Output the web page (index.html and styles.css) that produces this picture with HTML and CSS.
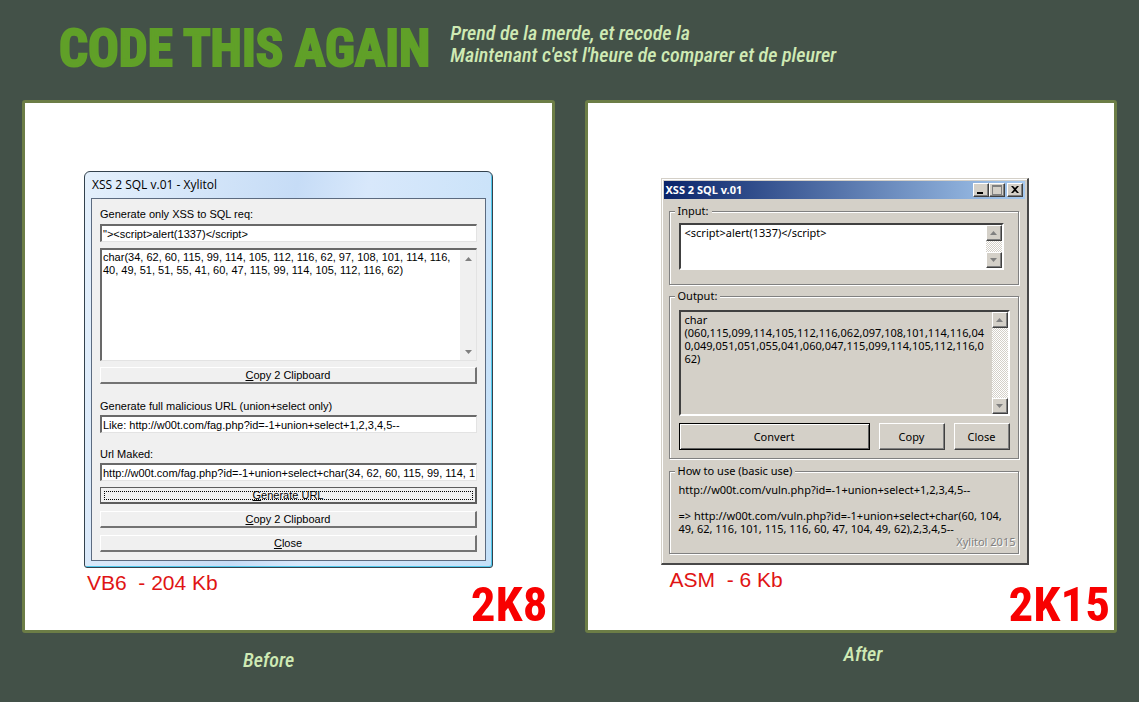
FILE: index.html
```html
<!DOCTYPE html>
<html lang="fr">
<head>
<meta charset="utf-8">
<title>Code this again</title>
<link rel="stylesheet" href="styles.css">
</head>
<body>
<header class="masthead">
  <h1 class="masthead-title">CODE THIS AGAIN</h1>
  <p class="masthead-text">Prend de la merde, et recode la<br>Maintenant c'est l'heure de comparer et de pleurer</p>
</header>
<main class="comparison">
  <figure class="entry">
    <div class="panel panel-before">
      <section class="aero" aria-label="XSS 2 SQL v.01 - Xylitol">
        <h2 class="aero-title">XSS 2 SQL v.01 - Xylitol</h2>
        <form class="aero-body">
          <label class="aero-label" for="req">Generate only XSS to SQL req:</label>
          <input class="aero-input" id="req" type="text" value="&quot;&gt;&lt;script&gt;alert(1337)&lt;/script&gt;">
          <div class="aero-memo">
            <textarea class="aero-area" aria-label="SQL request">char(34, 62, 60, 115, 99, 114, 105, 112, 116, 62, 97, 108, 101, 114, 116,
40, 49, 51, 51, 55, 41, 60, 47, 115, 99, 114, 105, 112, 116, 62)</textarea>
            <div class="aero-scroll" aria-hidden="true">
              <svg class="arrow" viewBox="0 0 7 4"><path d="M0 4L3.500 0L7 4Z"/></svg>
              <svg class="arrow" viewBox="0 0 7 4"><path d="M0 0L3.500 4L7 0Z"/></svg>
            </div>
          </div>
          <button class="aero-button" type="button"><u>C</u>opy 2 Clipboard</button>
          <label class="aero-label aero-label-spaced" for="url">Generate full malicious URL (union+select only)</label>
          <input class="aero-input" id="url" type="text" value="Like: http://w00t.com/fag.php?id=-1+union+select+1,2,3,4,5--">
          <label class="aero-label aero-label-spaced" for="made">Url Maked:</label>
          <input class="aero-input" id="made" type="text" value="http://w00t.com/fag.php?id=-1+union+select+char(34, 62, 60, 115, 99, 114, 105, 112, 116, 62)">
          <button class="aero-button aero-button-focused" type="button"><u>G</u>enerate URL</button>
          <button class="aero-button" type="button"><u>C</u>opy 2 Clipboard</button>
          <button class="aero-button" type="button"><u>C</u>lose</button>
        </form>
      </section>
      <div class="panel-foot">
        <p class="size">VB6  - 204 Kb</p>
        <p class="year">2K8</p>
      </div>
    </div>
    <figcaption class="caption caption-before">Before</figcaption>
  </figure>
  <figure class="entry">
    <div class="panel panel-after">
      <section class="classic" aria-label="XSS 2 SQL v.01">
        <div class="classic-bar">
          <h2 class="classic-title">XSS 2 SQL v.01</h2>
          <button class="classic-control" type="button" aria-label="Minimize"><svg class="glyph" viewBox="0 0 12 10"><path d="M2 7h6v2H2z"/></svg></button>
          <button class="classic-control" type="button" aria-label="Maximize"><svg class="glyph glyph-off" viewBox="0 0 12 10"><path d="M1 0h10v10H1zM2 2v7h8V2z" fill-rule="evenodd"/></svg></button>
          <button class="classic-control classic-control-close" type="button" aria-label="Close window"><svg class="glyph" viewBox="0 0 12 10"><path d="M2 1h2l2 2 2-2h2L7 4.500 10 8H8L6 6 4 8H2l3-3.500z"/></svg></button>
        </div>
        <form class="classic-body">
          <fieldset class="group group-input">
            <legend class="group-name">Input:</legend>
            <div class="memo memo-input">
              <textarea class="memo-area" aria-label="Input">&lt;script&gt;alert(1337)&lt;/script&gt;</textarea>
              <div class="memo-scroll" aria-hidden="true">
                <span class="memo-arrow"><svg class="arrow" viewBox="0 0 7 4"><path d="M0 4L3.500 0L7 4Z"/></svg></span>
                <span class="memo-arrow"><svg class="arrow" viewBox="0 0 7 4"><path d="M0 0L3.500 4L7 0Z"/></svg></span>
              </div>
            </div>
          </fieldset>
          <fieldset class="group group-output">
            <legend class="group-name">Output:</legend>
            <div class="memo memo-output">
              <textarea class="memo-area" aria-label="Output" readonly>char
(060,115,099,114,105,112,116,062,097,108,101,114,116,04
0,049,051,051,055,041,060,047,115,099,114,105,112,116,0
62)</textarea>
              <div class="memo-scroll" aria-hidden="true">
                <span class="memo-arrow"><svg class="arrow" viewBox="0 0 7 4"><path d="M0 4L3.500 0L7 4Z"/></svg></span>
                <span class="memo-arrow"><svg class="arrow" viewBox="0 0 7 4"><path d="M0 0L3.500 4L7 0Z"/></svg></span>
              </div>
            </div>
            <div class="actions">
              <button class="action action-default" type="button">Convert</button>
              <button class="action action-copy" type="button">Copy</button>
              <button class="action" type="button">Close</button>
            </div>
          </fieldset>
          <fieldset class="group group-help">
            <legend class="group-name">How to use (basic use)</legend>
            <p class="help">http://w00t.com/vuln.php?id=-1+union+select+1,2,3,4,5--

=&gt; http://w00t.com/vuln.php?id=-1+union+select+char(60, 104,
49, 62, 116, 101, 115, 116, 60, 47, 104, 49, 62),2,3,4,5--</p>
            <p class="credit">Xylitol 2015</p>
          </fieldset>
        </form>
      </section>
      <div class="panel-foot">
        <p class="size">ASM  - 6 Kb</p>
        <p class="year">2K15</p>
      </div>
    </div>
    <figcaption class="caption caption-after">After</figcaption>
  </figure>
</main>
</body>
</html>
```
FILE: styles.css
```css
* { box-sizing: border-box; }

body {
  margin: 0;
  background: #435148;
  font-family: "Liberation Sans", Arial, sans-serif;
  color: #000;
}

h1, h2, p, figure, form { margin: 0; }

/* Masthead */
.masthead {
  display: flex;
  gap: 20px;
  height: 100px;
  padding: 20px 24px 0 59px;
}

.masthead-title {
  font: 700 51px/58px "Roboto Condensed", "Liberation Sans Narrow", sans-serif;
  color: #60a028;
  -webkit-text-stroke: 2px #60a028;
  white-space: nowrap;
}

.masthead-text,
.caption {
  font: italic 500 20px/22px "Roboto Condensed", "Liberation Sans Narrow", sans-serif;
  color: #cfeab4;
}

.masthead-text { padding-top: 2px; }

/* Two panels side by side */
.comparison {
  display: grid;
  grid-template-columns: 1fr 1fr;
  gap: 30px;
  padding: 0 22px;
}

.entry {
  display: flex;
  flex-direction: column;
}

.panel {
  display: flex;
  flex-direction: column;
  min-height: 533px;
  border: 3px solid #6c7d46;
  border-radius: 3px;
  background: #fff;
}

.panel-before { padding: 68px 4px 0 59px; }
.panel-after { padding: 75px 4px 0 73px; }

.panel-foot {
  display: flex;
  flex: 1;
  justify-content: space-between;
  padding-left: 3px;
}

.panel-after .panel-foot { padding-left: 9px; }

.size {
  font-size: 21px;
  line-height: 30px;
  color: #e01414;
  white-space: pre;
}

.year {
  align-self: flex-end;
  font: 700 49px/50px "Roboto Condensed", "Liberation Sans Narrow", sans-serif;
  color: #f80000;
}

.caption { padding-top: 16px; }
.caption-before { padding-left: 221px; }
.caption-after { padding-top: 10px; padding-left: 259px; }

.arrow {
  display: block;
  width: 7px;
  height: 4px;
  fill: #808080;
}

/* Aero window */
.aero {
  width: 409px;
  max-width: 100%;
  padding: 0 6px 6px;
  border: 1px solid #33424e;
  border-radius: 6px 6px 3px 3px;
  background: linear-gradient(100deg, #e4f0fc 0, #c6dcf6 45%, #d8e8fb 60%, #c4e0f8 100%);
  box-shadow: inset -1px -1px 0 #50c8ec;
}

.aero-title {
  padding-left: 1px;
  font: 400 12px/26px "Open Sans", "Noto Sans", sans-serif;
}

.aero-body {
  display: flex;
  flex-direction: column;
  padding: 7px 8px 8px;
  border: 1px solid #5c6b80;
  background: #f0f0f0;
  font-size: 11px;
}

.aero-label { line-height: 16px; padding-bottom: 2px; }

.aero-input {
  width: 100%;
  height: 18px;
  padding: 0 1px;
  border: 1px solid #e3e3e3;
  border-top: 2px solid #696969;
  border-left: 2px solid #696969;
  border-radius: 0;
  background: #fff;
  font: inherit;
}

.aero-memo {
  display: flex;
  height: 113px;
  margin: 6px 0;
  border: 1px solid #e3e3e3;
  border-top: 2px solid #696969;
  border-left: 2px solid #696969;
  background: #fff;
}

.aero-area,
.memo-area {
  flex: 1;
  min-width: 0;
  padding: 1px;
  border: 0;
  background: none;
  font: inherit;
  line-height: 13px;
  white-space: pre;
  overflow: hidden;
  resize: none;
}

.aero-scroll {
  display: flex;
  flex-direction: column;
  justify-content: space-between;
  align-items: center;
  width: 16px;
  padding: 7px 0 6px;
  background: #f0f0f0;
}

.aero-button {
  height: 17px;
  margin-bottom: 7px;
  padding: 0;
  border: 1px solid #fff;
  border-right: 2px solid #737373;
  border-bottom: 2px solid #737373;
  background: #f0f0f0;
  font: inherit;
  line-height: 13px;
}

.aero-button:last-child { margin-bottom: 0; }

.aero-button-focused {
  margin-top: 6px;
  border: 1px solid #5c5c5c;
  border-right-width: 2px;
  border-bottom-width: 2px;
  outline: 1px dotted #000;
  outline-offset: -5px;
}

.aero-label-spaced { padding-top: 13px; padding-bottom: 1px; }
.aero-button + .aero-label-spaced { padding-top: 7px; }

/* Classic window */
.classic {
  width: 368px;
  max-width: 100%;
  padding: 1px;
  border: 1px solid #d4d0c8;
  border-right: 2px solid #484848;
  border-bottom: 2px solid #484848;
  background: #d4d0c8;
  box-shadow: inset 1px 1px 0 #fff;
  font: 11px/13px "Noto Sans", sans-serif;
}

.classic-bar {
  display: flex;
  align-items: center;
  height: 18px;
  margin: 1px;
  padding: 0 2px;
  background: linear-gradient(90deg, #0a246a, #a6caf0);
}

.classic-title {
  flex: 1;
  font: 700 11px/16px "Noto Sans", sans-serif;
  color: #fff;
}

.classic-control {
  display: flex;
  justify-content: center;
  align-items: center;
  width: 16px;
  height: 14px;
  padding: 0;
  border: 1px solid #fff;
  border-right-color: #404040;
  border-bottom-color: #404040;
  background: #d4d0c8;
  box-shadow: inset -1px -1px 0 #808080;
}

.classic-control-close { margin-left: 2px; }

.glyph {
  width: 12px;
  height: 10px;
  fill: #000;
}

.glyph-off { fill: #808080; }

.classic-body { padding: 4px 7px 8px 6px; }

.group {
  min-width: 0;
  margin: 0 0 4px;
  padding: 5px 8px 5px 9px;
  border: 1px solid #808080;
  box-shadow: 1px 1px 0 #fff, inset 1px 1px 0 #fff;
}

.group-name {
  margin-left: -4px;
  padding: 0 3px;
  background: #d4d0c8;
  line-height: 14px;
}

.group-input { padding-bottom: 14px; }
.group-output { margin-bottom: 5px; padding-top: 7px; }
.group-help { margin-bottom: 0; padding: 5px 2px 4px 9px; }

.memo {
  display: flex;
  border: 2px solid #404040;
  border-right-color: #fff;
  border-bottom-color: #fff;
}

.memo-input {
  height: 47px;
  margin-right: 6px;
  background: #fff;
}

.memo-area { padding: 1px 0 0 4px; }
.memo-output { height: 106px; }

.memo-scroll {
  display: flex;
  flex-direction: column;
  justify-content: space-between;
  width: 16px;
  background: repeating-conic-gradient(#fff 0 25%, #d4d0c8 0 50%) 0 0 / 2px 2px;
}

.memo-arrow {
  display: flex;
  justify-content: center;
  align-items: center;
  height: 16px;
  border: 1px solid #fff;
  border-right-color: #404040;
  border-bottom-color: #404040;
  background: #d4d0c8;
  box-shadow: inset -1px -1px 0 #808080;
}

.actions {
  display: flex;
  gap: 9px;
  padding: 7px 0 3px;
}

.action {
  width: 56px;
  height: 27px;
  padding: 0;
  border: 1px solid #fff;
  border-right-color: #404040;
  border-bottom-color: #404040;
  background: #d4d0c8;
  box-shadow: inset -1px -1px 0 #808080;
  font: inherit;
}

.action-copy { width: 66px; }

.action-default {
  flex: 1;
  border: 1px solid #000;
  box-shadow: inset 1px 1px 0 #fff, inset -1px -1px 0 #606060;
}

.help { white-space: pre; }

.credit {
  color: #808080;
  line-height: 14px;
  text-align: right;
  text-shadow: 1px 1px 0 #fff;
}
```
